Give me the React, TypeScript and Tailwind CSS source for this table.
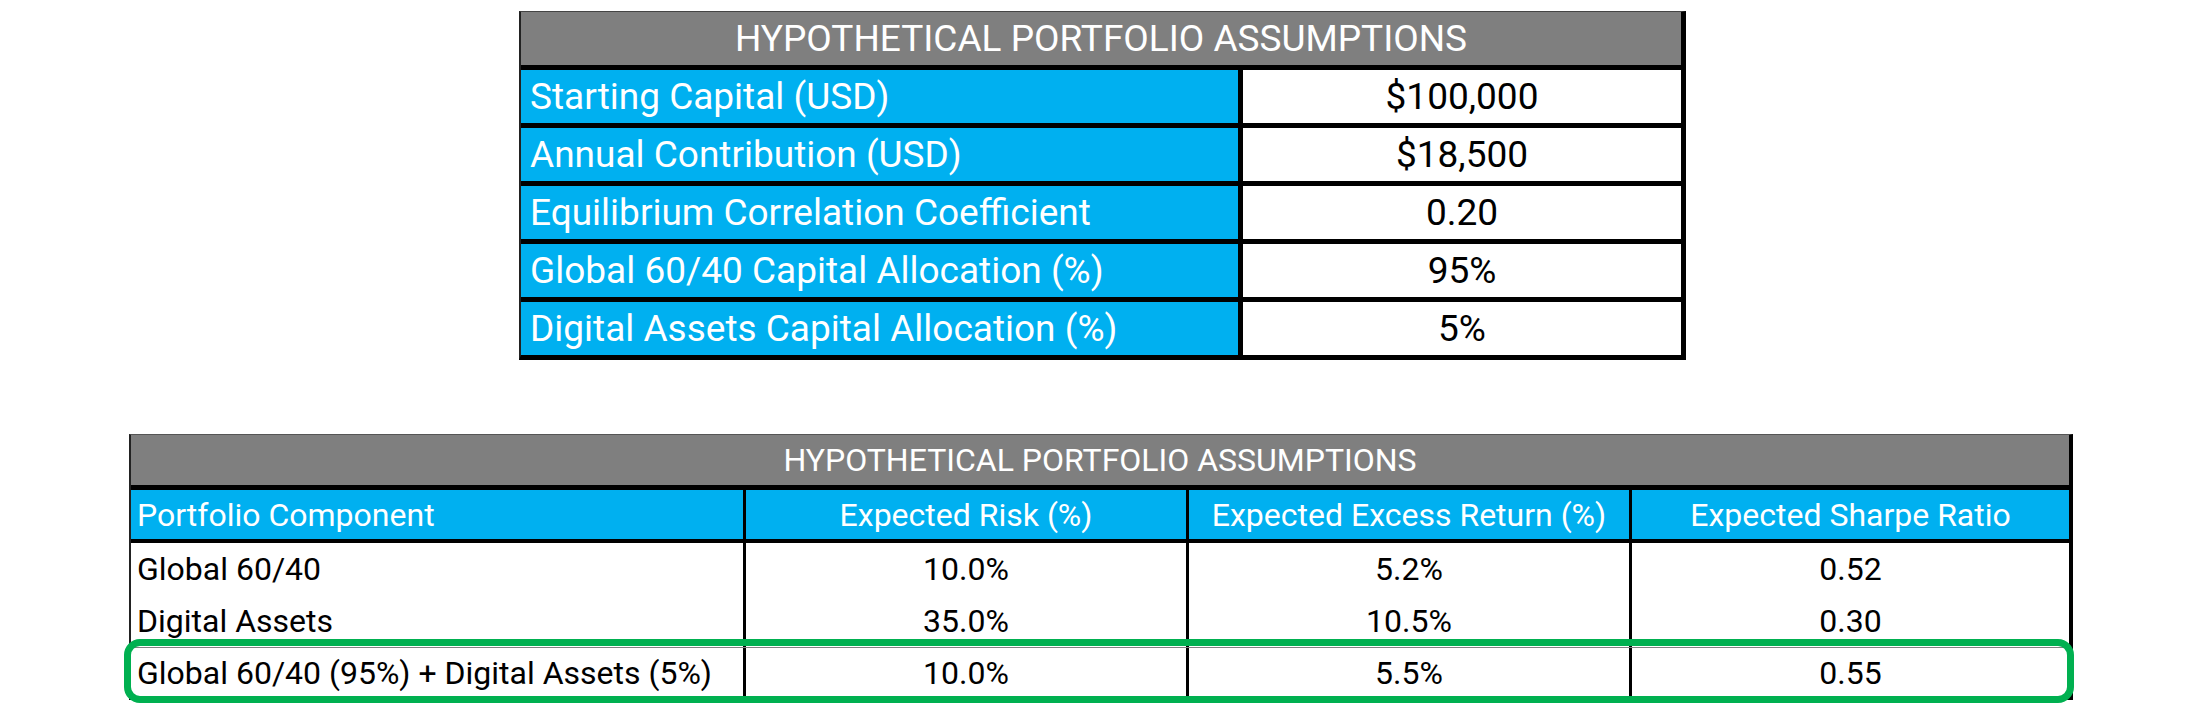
const inputs = [
  { label: "Starting Capital (USD)", value: "$100,000" },
  { label: "Annual Contribution (USD)", value: "$18,500" },
  { label: "Equilibrium Correlation Coefficient", value: "0.20" },
  { label: "Global 60/40 Capital Allocation (%)", value: "95%" },
  { label: "Digital Assets Capital Allocation (%)", value: "5%" },
];

const columns = [
  "Portfolio Component",
  "Expected Risk (%)",
  "Expected Excess Return (%)",
  "Expected Sharpe Ratio",
];

const rows = [
  ["Global 60/40", "10.0%", "5.2%", "0.52"],
  ["Digital Assets", "35.0%", "10.5%", "0.30"],
];

const blended = ["Global 60/40 (95%) + Digital Assets (5%)", "10.0%", "5.5%", "0.55"];

function DataRow({ cells, className }: { cells: string[]; className: string }) {
  return (
    <div className={`grid grid-cols-[615px_443px_443px_437px] ${className}`}>
      {cells.map((cell, i) => (
        <div
          key={i}
          className={`flex items-center ${i === 0 ? "pl-[6px]" : "justify-center"} ${
            i < 3 ? "border-r-[3px] border-black" : ""
          }`}
        >
          {cell}
        </div>
      ))}
    </div>
  );
}

export default function App() {
  return (
    <div
      className="min-h-[709px] bg-white pt-[11px]"
      style={{ fontFamily: "Roboto, 'Liberation Sans', sans-serif" }}
    >
      {/* inputs */}
      <div className="ml-[519px] w-[1167px] border-t border-l-2 border-r-[5px] border-b-[5px] border-t-[#444] border-l-[#222] border-r-black border-b-black text-[37px] leading-none">
        <div className="flex h-[53px] items-center justify-center bg-[#7f7f7f] text-white">
          HYPOTHETICAL PORTFOLIO ASSUMPTIONS
        </div>
        {inputs.map((row) => (
          <div key={row.label} className="grid grid-cols-[722px_1fr] border-t-[5px] border-black">
            <div className="flex h-[53px] items-center border-r-[5px] border-black bg-[#00b0f0] pl-[9px] text-white">
              {row.label}
            </div>
            <div className="flex h-[53px] items-center justify-center bg-white text-black">
              {row.value}
            </div>
          </div>
        ))}
      </div>

      {/* results */}
      <div className="relative ml-[129px] mt-[74px] w-[1944px]">
        <div className="border-t border-l-2 border-r-4 border-b-[3px] border-t-[#555] border-l-[#222] border-r-black border-b-black text-[32px] leading-none">
          <div className="flex h-[50px] items-center justify-center bg-[#7f7f7f] text-white">
            HYPOTHETICAL PORTFOLIO ASSUMPTIONS
          </div>
          <DataRow
            cells={columns}
            className="h-[54px] border-t-[5px] border-black bg-[#00b0f0] text-white"
          />
          <div className="border-t-4 border-black text-black">
            {rows.map((r) => (
              <DataRow key={r[0]} cells={r} className="h-[52px]" />
            ))}
          </div>
          <DataRow cells={blended} className="h-[50px] border-t border-[#808080] text-black" />
        </div>
        <div className="pointer-events-none absolute left-[-5px] top-[205px] h-[64px] w-[1950px] rounded-[16px] border-[7px] border-[#00b050]" />
      </div>
    </div>
  );
}
